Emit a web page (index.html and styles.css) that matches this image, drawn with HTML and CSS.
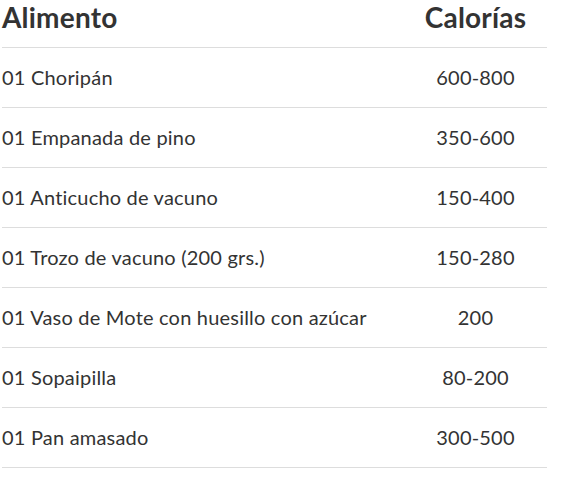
FILE: index.html
```html
<!DOCTYPE html>
<html lang="es">
<head>
<meta charset="utf-8">
<link rel="stylesheet" href="styles.css">
</head>
<body>
<table class="cal">
  <thead>
    <tr><th class="food">Alimento</th><th class="kcal">Calorías</th></tr>
  </thead>
  <tbody>
    <tr><td class="food">01 Choripán</td><td class="kcal">600-800</td></tr>
    <tr><td class="food">01 Empanada de pino</td><td class="kcal">350-600</td></tr>
    <tr><td class="food">01 Anticucho de vacuno</td><td class="kcal">150-400</td></tr>
    <tr><td class="food">01 Trozo de vacuno (200 grs.)</td><td class="kcal">150-280</td></tr>
    <tr><td class="food">01 Vaso de Mote con huesillo con azúcar</td><td class="kcal">200</td></tr>
    <tr><td class="food">01 Sopaipilla</td><td class="kcal">80-200</td></tr>
    <tr><td class="food">01 Pan amasado</td><td class="kcal">300-500</td></tr>
  </tbody>
</table>
</body>
</html>
```
FILE: styles.css
```css
html, body { margin: 0; padding: 0; background: #fff; }
body { font-family: Lato, "Open Sans", sans-serif; color: #333; }
.cal {
  margin-left: 2px;
  width: 545px;
  border-collapse: collapse;
}
.cal th, .cal td {
  padding: 0;
  border-bottom: 1px solid #ddd;
}
.cal th {
  height: 47px;
  font-size: 28px;
  font-weight: 700;
  letter-spacing: 0.2px;
  vertical-align: top;
  padding-top: 1px;
  box-sizing: border-box;
  line-height: 32px;
}
.cal td {
  height: 59px;
  font-size: 20px;
  font-weight: 400;
  letter-spacing: 0.2px;
  line-height: 24px;
  vertical-align: middle;
}
.cal .food { text-align: left; }
.cal .kcal { text-align: center; width: 143px; }
```
